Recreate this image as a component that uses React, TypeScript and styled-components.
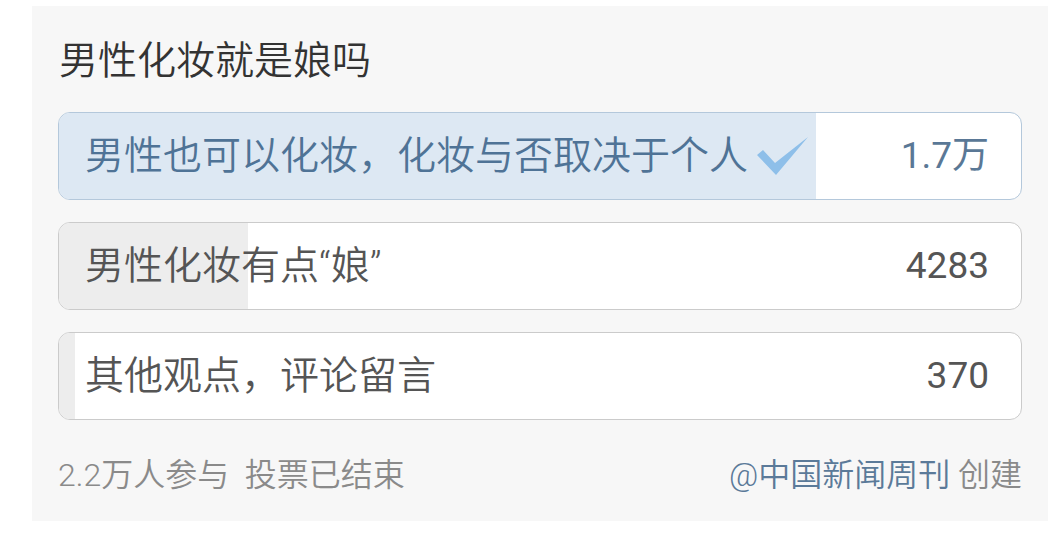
import React from 'react'
import styled, { createGlobalStyle } from 'styled-components'

const GlobalStyle = createGlobalStyle`
  html, body {
    margin: 0;
    padding: 0;
    background: #ffffff;
  }
  body {
    font-family: Roboto, "Noto Sans CJK SC", "Noto Sans", sans-serif;
    font-weight: 350;
  }
`

const Card = styled.div`
  width: 1016px;
  margin: 6px 0 0 32px;
  padding: 0 26px 26px;
  box-sizing: border-box;
  background: #f7f7f7;
`

const Title = styled.h1`
  margin: 0;
  padding: 30px 0 26px 1px;
  font-size: 39px;
  line-height: 50px;
  font-weight: 350;
  color: #333333;
`

const OptionList = styled.div`
  display: flex;
  flex-direction: column;
  gap: 22px;
`

const Option = styled.div<{ $chosen?: boolean }>`
  position: relative;
  height: 88px;
  box-sizing: border-box;
  border: 1px solid ${(p) => (p.$chosen ? '#b4c8db' : '#cbcbcb')};
  border-radius: 12px;
  background: #ffffff;
  overflow: hidden;
  display: flex;
  align-items: center;
  padding: 0 34px 0 26px;
`

const Fill = styled.div<{ $chosen?: boolean }>`
  position: absolute;
  left: 0;
  top: 0;
  bottom: 0;
  background: ${(p) => (p.$chosen ? '#dde8f3' : '#ededed')};
`

const Label = styled.span<{ $chosen?: boolean }>`
  position: relative;
  font-size: 39px;
  line-height: 50px;
  color: ${(p) => (p.$chosen ? '#4f7396' : '#555555')};
  white-space: nowrap;
`

const Check = styled.svg`
  position: relative;
  margin-left: 9px;
  width: 52px;
  height: 40px;
  flex: none;
`

const Count = styled.span<{ $chosen?: boolean }>`
  position: relative;
  margin-left: auto;
  margin-right: -2px;
  font-size: 37px;
  line-height: 50px;
  font-weight: 400;
  color: ${(p) => (p.$chosen ? '#5a7896' : '#555555')};
`

const Footer = styled.div`
  display: flex;
  justify-content: space-between;
  align-items: center;
  margin-top: 35px;
  font-size: 32px;
  line-height: 40px;
  color: #8a8a8a;
`

const Author = styled.span`
  color: #5b7a99;
`

const options = [
  { label: '男性也可以化妆，化妆与否取决于个人', count: '1.7万', votes: 17200, chosen: true },
  { label: '男性化妆有点“娘”', count: '4283', votes: 4283 },
  { label: '其他观点，评论留言', count: '370', votes: 370 },
]

const total = options.reduce((s, o) => s + o.votes, 0)

export default function App() {
  return (
    <>
      <GlobalStyle />
      <Card>
        <Title>男性化妆就是娘吗</Title>
        <OptionList>
          {options.map((o) => (
            <Option key={o.label} $chosen={o.chosen}>
              <Fill $chosen={o.chosen} style={{ width: `${(o.votes / total) * 100}%` }} />
              <Label $chosen={o.chosen}>{o.label}</Label>
              {o.chosen && (
                <Check viewBox="0 0 52 40">
                  <polygon points="0,19 6,14 18,27 51,1 19,39" fill="#8ebfe9" />
                </Check>
              )}
              <Count $chosen={o.chosen}>{o.count}</Count>
            </Option>
          ))}
        </OptionList>
        <Footer>
          <span>2.2万人参与&nbsp;&nbsp;投票已结束</span>
          <span>
            <Author>@中国新闻周刊</Author> 创建
          </span>
        </Footer>
      </Card>
    </>
  )
}
